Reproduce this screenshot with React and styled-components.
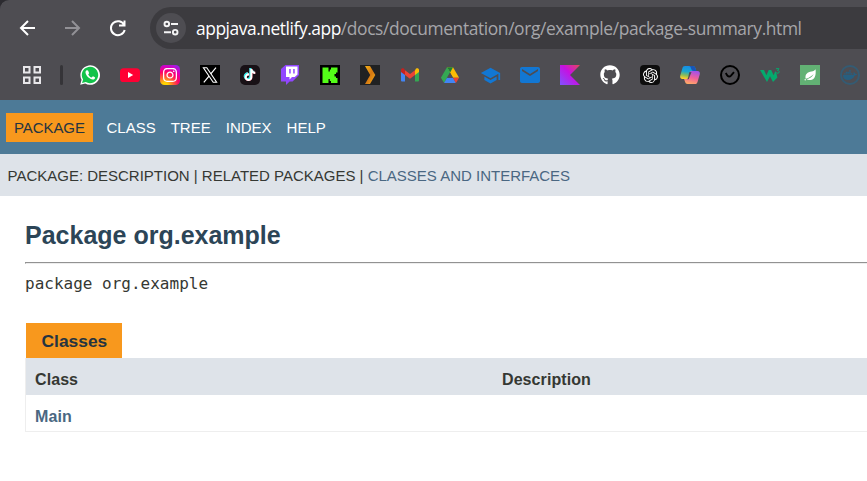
import React from "react";
import styled, { createGlobalStyle } from "styled-components";
import { FaInstagram, FaTiktok, FaGithub, FaDocker } from "react-icons/fa6";
import { MdSchool, MdEmail } from "react-icons/md";
import { SiOpenai } from "react-icons/si";

const GlobalStyle = createGlobalStyle`
  * { box-sizing: border-box; }
  body { margin: 0; background: #fff; overflow: hidden; font-family: "Liberation Sans", Arial, sans-serif; color: #353833; }
`;

const Page = styled.div`
  width: 867px;
  height: 481px;
  overflow: hidden;
  background: #fff;
`;

const Chrome = styled.header`
  height: 100px;
  background: #4e4d52;
  border-top-left-radius: 9px;
  box-shadow: -9px -9px 0 9px #2c2b30;
`;

const Toolbar = styled.div`
  display: flex;
  align-items: center;
  height: 56px;
`;

const NavButtons = styled.div`
  display: flex;
  gap: 21px;
  width: 150px;
  padding-left: 16px;
`;

const NavIcon = styled.svg`
  width: 24px;
  height: 24px;
  fill: none;
  stroke: ${(p) => (p.$dim ? "#929196" : "#fff")};
  stroke-width: 2;
`;

const AddressBar = styled.div`
  display: flex;
  align-items: center;
  flex: 1;
  height: 42px;
  padding-left: 6px;
  border-radius: 21px 0 0 21px;
  background: #3c3b3f;
`;

const SiteInfo = styled.div`
  display: grid;
  place-items: center;
  width: 30px;
  height: 30px;
  border-radius: 50%;
  background: #4e4d52;
`;

const Url = styled.div`
  padding: 0 0 0 10px;
  font: 17.4px/26px "Open Sans", "Noto Sans", sans-serif;
  letter-spacing: -0.39px;
  color: #a6a6aa;
  white-space: nowrap;
`;

const Host = styled.span`
  color: #fff;
  letter-spacing: -0.45px;
`;

const Bookmarks = styled.div`
  display: flex;
  align-items: center;
  height: 38px;
  padding-left: 23px;
`;

const Divider = styled.i`
  width: 3px;
  height: 20px;
  margin: 0 17px 0 19px;
  border-radius: 2px;
  background: #353438;
`;

const BookmarkList = styled.div`
  display: flex;
  gap: 20px;
`;

const Favicon = styled.span`
  display: flex;
  align-items: center;
  justify-content: center;
  flex: none;
  width: 20px;
  height: 20px;
  border-radius: ${(p) => p.$radius || 0}px;
  background: ${(p) => p.$bg || "transparent"};
  color: ${(p) => p.$color || "#fff"};
  svg { display: block; flex: none; }
`;

const TikTok = styled(FaTiktok)`
  filter: drop-shadow(-0.6px -0.4px 0 #25f4ee) drop-shadow(0.6px 0.4px 0 #fe2c55);
`;

const TopNav = styled.nav`
  display: flex;
  align-items: center;
  height: 54px;
  padding-left: 6px;
  background: #4d7a97;
  font-size: 15px;
  color: #fff;
`;

const NavItem = styled.span`
  margin-right: 15px;
  white-space: nowrap;
`;

const ActiveItem = styled.span`
  height: 29px;
  width: 87px;
  padding-left: 8px;
  margin-right: 13.5px;
  line-height: 29px;
  letter-spacing: -0.08px;
  background: #f8981d;
  color: #253441;
`;

const SubNav = styled.div`
  height: 42px;
  padding-left: 7.5px;
  background: #dee3e9;
  font-size: 15px;
  line-height: 43px;
  letter-spacing: -0.005px;
  white-space: nowrap;
`;

const SubLink = styled.a`
  color: #4a6782;
`;

const Main = styled.main`
  padding: 24px 0 0 25px;
`;

const Title = styled.h1`
  margin: 0;
  height: 42px;
  font-size: 25px;
  line-height: 31px;
  color: #2c4557;
`;

const Rule = styled.div`
  height: 2px;
  border-top: 1px solid #929292;
  border-left: 1px solid #929292;
  border-bottom: 1px solid #ededed;
`;

const Signature = styled.div`
  height: 59px;
  padding-top: 9px;
  font: 16px/21px "DejaVu Sans Mono", monospace;
`;

const Caption = styled.div`
  width: 96px;
  height: 35px;
  margin-left: 1px;
  padding-left: 15.5px;
  background: #f8981d;
  color: #253441;
  font-size: 17.4px;
  font-weight: bold;
  line-height: 36px;
`;

const Table = styled.div`
  border-left: 1px solid #eee;
  border-bottom: 1px solid #eee;
  font-size: 16px;
  font-weight: bold;
`;

const Row = styled.div`
  display: grid;
  grid-template-columns: 467px 1fr;
  height: ${(p) => (p.$head ? 37 : 36)}px;
  padding-left: 9px;
  line-height: 44px;
  letter-spacing: 0.08px;
  background: ${(p) => (p.$head ? "#dee3e9" : "transparent")};
  color: ${(p) => (p.$head ? "#353833" : "#4a6782")};
`;

const Glyph = ({ children, size = 20 }) => (
  <svg width={size} height={size} viewBox="0 0 20 20">{children}</svg>
);

const WhatsApp = () => (
  <Glyph>
    <path d="M.2 19.8 1.6 14.8A9.8 9.8 0 1 1 5.2 18.5z" fill="#fff" />
    <path d="M2 18 3.1 14.4A8.2 8.2 0 1 1 5.8 17z" fill="#12c34a" />
    <path d="M6.8 5.2c-.7.2-1.4 1.2-1.3 2.4.4 3.3 4.3 6.9 7.2 7 1.5 0 2.5-.9 2.4-2.1-.6-.6-1.5-1-2.2-1.2l-1.2 1.3c-1.5-.6-2.7-1.7-3.5-3.2l.9-1.2-.9-2.4c-.2-.6-.8-.7-1.4-.6z" fill="#fff" />
  </Glyph>
);

const YouTube = () => (
  <Glyph>
    <rect y="3.2" width="20" height="13.8" rx="3.6" fill="#ff0033" />
    <path d="M8 7v6l5.2-3z" fill="#fff" />
  </Glyph>
);

const XLogo = () => (
  <Glyph>
    <path d="M3.4 2.8h3.4l9.8 14.4h-3.4z" fill="none" stroke="#fff" strokeWidth="1.1" />
    <path d="M16 2.6 10.8 8.8M9 11.2l-5.2 6.2" fill="none" stroke="#fff" strokeWidth="1.2" />
  </Glyph>
);

const Twitch = () => (
  <Glyph>
    <path d="M5.5 0 1 4v12.5h5V20l3.6-3.5h3L19 10V0z" fill="#9146ff" />
    <path d="M6 1.5h11.5v8L14.7 12H12l-2.5 2.5V12H6z" fill="#fff" />
    <path d="M9.2 4h1.5v4.5H9.2zM13.2 4h1.5v4.5h-1.5z" fill="#9146ff" />
  </Glyph>
);

const Kick = () => (
  <Glyph>
    <path d="M2.5 2.5H8.5v4h1.3V4.5H11V2.5h6.5V7.5H16V9h-1.5v2.5H16V13h1.5v5H11v-2H9.8v-2H8.5v4h-6z" fill="#53fc18" />
  </Glyph>
);

const Plex = () => (
  <Glyph>
    <defs><linearGradient id="plex" x2="1" y2="1"><stop stopColor="#f9b316" /><stop offset=".5" stopColor="#d47712" /><stop offset="1" stopColor="#f6ae17" /></linearGradient></defs>
    <path d="M5 1h5l5.3 9L10 19H5l5.2-9z" fill="url(#plex)" />
  </Glyph>
);

const Gmail = () => (
  <Glyph>
    <path d="M1 6v9.2c0 .8.5 1.3 1.3 1.3H5V9z" fill="#4285f4" />
    <path d="M15 9v7.5h2.7c.8 0 1.3-.5 1.3-1.3V6z" fill="#34a853" />
    <path d="M15 5.2V10l4-3V5c0-1.7-1.9-2.3-3.1-1.3z" fill="#fbbc04" />
    <path d="M5 5.2 10 9l5-3.8V10l-5 3.8L5 10z" fill="#ea4335" />
    <path d="M1 5v2l4 3V5.2L4.1 3.7C2.9 2.7 1 3.3 1 5z" fill="#c5221f" />
  </Glyph>
);

const Drive = () => (
  <Glyph>
    <path d="M7 2.2h6l6.1 10.6H13z" fill="#fbbc04" />
    <path d="M7 2.2h6L10.2 7.4z" fill="#188038" />
    <path d="m7 2.2 3.1 5.2-6 10.5L.9 12.8z" fill="#34a853" />
    <path d="M7 12.8h6l2.9 5.1H4.1z" fill="#4285f4" />
    <path d="M13 12.8h6.1l-3.2 5.1z" fill="#ea4335" />
    <path d="m10 7.8 3 5H7z" fill="#4e4d52" />
  </Glyph>
);

const Kotlin = () => (
  <Glyph>
    <defs><linearGradient id="kotlin" x1="1" y1="0" x2="0" y2="1"><stop stopColor="#e44857" /><stop offset=".45" stopColor="#c711e1" /><stop offset="1" stopColor="#7f52ff" /></linearGradient></defs>
    <path d="M0 0h20L10 10l10 10H0z" fill="url(#kotlin)" />
  </Glyph>
);

const Copilot = () => (
  <Glyph>
    <defs>
      <linearGradient id="copilotLeft" x1=".6" y1="0" x2=".4" y2="1"><stop stopColor="#168be8" /><stop offset=".45" stopColor="#19a7cf" /><stop offset=".75" stopColor="#8cbc57" /><stop offset="1" stopColor="#ffd02c" /></linearGradient>
      <linearGradient id="copilotRight" x1=".6" y1="0" x2=".3" y2="1"><stop stopColor="#a551e8" /><stop offset=".5" stopColor="#f1619a" /><stop offset="1" stopColor="#ffac65" /></linearGradient>
    </defs>
    <path d="M5 1h8c1.5 0 2 1 2.5 2.6L16.3 6h-2.2c-1.5 0-2.1.7-2.5 2.1L9.9 14H2.4C.4 14-.2 12.2.3 10.4L2.4 3.3C2.9 1.8 3.5 1 5 1z" fill="url(#copilotLeft)" />
    <path d="M8.8 1H13c1.5 0 2 1 2.5 2.6l.8 2.4h-2.2c-1.8 0-2.4-.4-2.9-2.2C10.8 2.3 10.2 1 8.8 1z" fill="#1955b7" />
    <path d="M15 19H7.7c-1.5 0-2.3-.8-2.8-2.5L4.1 14h2.1c1.5 0 2.1-.7 2.5-2.1L10.4 6h7.2c2 0 2.6 1.8 2.1 3.6l-2.1 7.1c-.5 1.5-1.1 2.3-2.6 2.3z" fill="url(#copilotRight)" />
    <path d="m9.2 7.2 2.3-.2-2.8 7.2-2.2.1c1 0 1.4-.8 1.8-2.2z" fill="#4e4d52" />
  </Glyph>
);

const CheckRing = () => (
  <Glyph>
    <circle cx="10" cy="10" r="9" fill="none" stroke="#000" strokeWidth="2" />
    <path d="m5.8 8 1.2 2.1c1.2 1.8 2.8 1.8 4 .5l3-3.4" fill="none" stroke="#000" strokeWidth="1.9" />
  </Glyph>
);

const W3Schools = () => (
  <Glyph>
    <path d="M0 5h4l2.4 5.2L8.7 5h2.5l2.4 5.2L15.4 6l1.2 3 .8 3.5L13 17 10 11.2 7 17z" fill="#04aa6d" />
    <path d="M16 3.7h3l-1.5 1.8c1.2 0 1.7.6 1.7 1.4 0 1.5-2.2 1.8-3 .6" fill="none" stroke="#04aa6d" strokeWidth="1" />
  </Glyph>
);

const Leaf = () => (
  <Glyph>
    <path d="M15.6 4.2c.5 5.5-.3 10.5-5.2 10.8-1.6.1-3-.3-3.8-.8 3.2-.7 5.6-2.3 7.1-5.2-2 2.3-4.4 3.8-8 4.7C4.7 9.3 7.6 7 11.5 6.5c2-.3 3.2-1 4.1-2.3z" fill="#fff" />
    <circle cx="5.2" cy="14.7" r=".7" fill="#fff" />
  </Glyph>
);

const DockerRing = styled.span`
  display: flex;
  align-items: center;
  justify-content: center;
  flex: none;
  width: 20px;
  height: 20px;
  border: 2px solid #345b73;
  border-radius: 50%;
  color: #275f80;
  svg { flex: none; }
`;

const bookmarks = [
  { icon: <WhatsApp /> },
  { icon: <YouTube /> },
  { icon: <FaInstagram size={16} />, radius: 4.5, bg: "radial-gradient(circle at 25% 105%, #ffd500 0 12%, #ff6930 32%, #ff0069 55%, #d300c5 76%, #7638fa)" },
  { icon: <XLogo />, bg: "#000" },
  { icon: <TikTok size={12} />, radius: 5, bg: "#181116" },
  { icon: <Twitch /> },
  { icon: <Kick />, bg: "#000" },
  { icon: <Plex />, bg: "#202122" },
  { icon: <Gmail /> },
  { icon: <Drive /> },
  { icon: <MdSchool size={21} />, color: "#1277d3" },
  { icon: <MdEmail size={24} />, color: "#1277d3" },
  { icon: <Kotlin /> },
  { icon: <FaGithub size={20} /> },
  { icon: <SiOpenai size={15} />, radius: 4, bg: "#0d0d0d" },
  { icon: <Copilot /> },
  { icon: <CheckRing /> },
  { icon: <W3Schools /> },
  { icon: <Leaf />, bg: "#62b174" },
];

export default function App() {
  return (
    <Page>
      <GlobalStyle />
      <Chrome>
        <Toolbar>
          <NavButtons>
            <NavIcon viewBox="0 0 24 24"><path d="M19 12H5.5M12 5l-7 7 7 7" /></NavIcon>
            <NavIcon $dim viewBox="0 0 24 24"><path d="M4 12h13.5M11 5l7 7-7 7" /></NavIcon>
            <NavIcon viewBox="0 0 24 24"><path d="M18.2 9A7 7 0 1 0 18.7 14M18.5 4.5v5h-5.5" /></NavIcon>
          </NavButtons>
          <AddressBar>
            <SiteInfo>
              <svg width="18" height="18" viewBox="0 0 18 18" fill="none" stroke="#f4f4f5" strokeWidth="1.9">
                <circle cx="4.8" cy="5" r="2.3" /><path d="M9 5h7M2 13.2h7" /><circle cx="13.2" cy="13.2" r="2.3" />
              </svg>
            </SiteInfo>
            <Url><Host>appjava.netlify.app</Host>/docs/documentation/org/example/package-summary.html</Url>
          </AddressBar>
        </Toolbar>
        <Bookmarks>
          <svg width="18" height="18" viewBox="0 0 18 18" fill="none" stroke="#e8e7ea" strokeWidth="2">
            <path d="M1 1h5.5v5.5H1zM11.5 1H17v5.5h-5.5zM1 11.5h5.5V17H1zM11.5 11.5H17V17h-5.5z" />
          </svg>
          <Divider />
          <BookmarkList>
            {bookmarks.map((b, i) => (
              <Favicon key={i} $bg={b.bg} $color={b.color} $radius={b.radius}>{b.icon}</Favicon>
            ))}
            <DockerRing><FaDocker size={14} /></DockerRing>
          </BookmarkList>
        </Bookmarks>
      </Chrome>
      <TopNav>
        <ActiveItem>PACKAGE</ActiveItem>
        <NavItem>CLASS</NavItem>
        <NavItem>TREE</NavItem>
        <NavItem>INDEX</NavItem>
        <NavItem>HELP</NavItem>
      </TopNav>
      <SubNav>
        PACKAGE: DESCRIPTION | RELATED PACKAGES | <SubLink>CLASSES AND INTERFACES</SubLink>
      </SubNav>
      <Main>
        <Title>Package org.example</Title>
        <Rule />
        <Signature>package org.example</Signature>
        <Caption>Classes</Caption>
        <Table>
          <Row $head><span>Class</span><span>Description</span></Row>
          <Row><span>Main</span></Row>
        </Table>
      </Main>
    </Page>
  );
}
